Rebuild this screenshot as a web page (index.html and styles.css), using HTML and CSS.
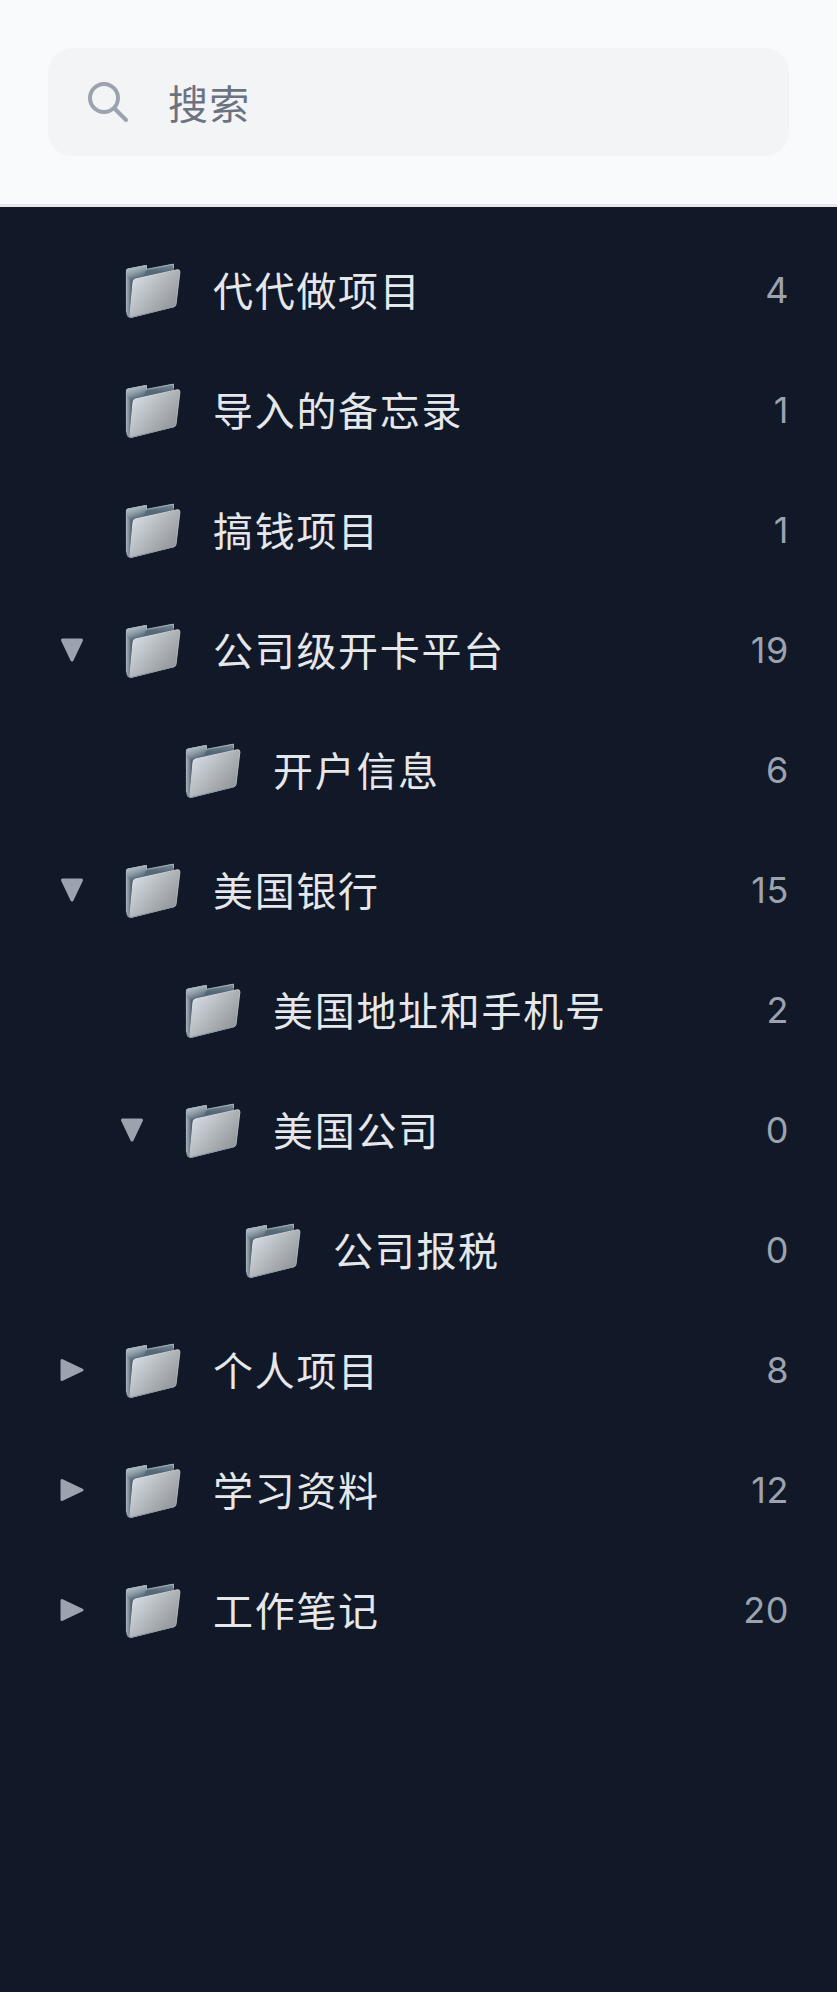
FILE: index.html
```html
<!DOCTYPE html>
<html lang="zh-CN">
<head>
<meta charset="utf-8">
<title>文件夹</title>
<link rel="stylesheet" href="styles.css">
</head>
<body>
<svg class="defs" aria-hidden="true">
  <defs>
    <linearGradient id="tab" gradientUnits="userSpaceOnUse" x1="6" y1="4" x2="12" y2="20">
      <stop offset="0" stop-color="#b8c2cb"/><stop offset="0.4" stop-color="#8e9ca8"/><stop offset="0.75" stop-color="#5b6b78"/><stop offset="1" stop-color="#465460"/>
    </linearGradient>
    <linearGradient id="side" x1="0" y1="0" x2="1" y2="0">
      <stop offset="0" stop-color="#a3afb9"/><stop offset="0.4" stop-color="#84919c"/><stop offset="1" stop-color="#34414c"/>
    </linearGradient>
    <linearGradient id="back" x1="0" y1="0" x2="0" y2="1">
      <stop offset="0" stop-color="#7c8d9b"/><stop offset="0.15" stop-color="#566875"/><stop offset="1" stop-color="#4b5a67"/>
    </linearGradient>
    <linearGradient id="front" x1="0" y1="0.1" x2="1" y2="0.9">
      <stop offset="0" stop-color="#dce3ea"/><stop offset="0.45" stop-color="#b5babf"/><stop offset="1" stop-color="#888c8f"/>
    </linearGradient>
    <linearGradient id="edge" x1="0" y1="0" x2="1" y2="1">
      <stop offset="0" stop-color="#e8eef4"/><stop offset="0.5" stop-color="#bac2c8"/><stop offset="1" stop-color="#a3a9ac"/>
    </linearGradient>
    <symbol id="folder" viewBox="0 0 56 56">
      <path d="M1 8Q1 6 3 5.600L21 2Q22 2 22 3V6L48 .8Q49 .7 49 2V11L8 19 5 54.500Q2 54 1.500 50Z" fill="url(#back)"/>
      <path d="M1 8Q1 6 3 5.600L21 2Q22 2 22 3V6L21 8 18 14 8 19 5 54.500Q2 54 1.500 50Z" fill="url(#tab)"/>
      <path d="M1 14 8 19 5 54.500Q2 54 1.500 50Z" fill="url(#side)"/>
      <path d="M1.400 49V8Q1.500 6.500 3 6.200L21.500 2.500V6.300L48.500 1.200V5" fill="none" stroke="#a9b5bf" stroke-width=".9"/>
      <path d="M8 19Q8.200 16.800 10.500 16L52.500 6.700Q55 6.400 54.900 9L51 41.500Q50.700 43.200 49 43.700L6.500 54.400Q4.600 54.600 5 52.500Z" fill="url(#front)" stroke="url(#edge)" stroke-width="1"/>
      <path d="M2 50Q2.600 54.600 5 54.500L49 43.700" fill="none" stroke="#8b979f" stroke-width="1"/>
    </symbol>
    <symbol id="right" viewBox="0 0 24 24">
      <path d="M2 2.500 22 12 2 21.500Z" fill="#9ca3af" stroke="#9ca3af" stroke-width="3" stroke-linejoin="round"/>
    </symbol>
    <symbol id="down" viewBox="0 0 24 24">
      <path d="M2.500 2H21.500L12 22Z" fill="#9ca3af" stroke="#9ca3af" stroke-width="3" stroke-linejoin="round"/>
    </symbol>
  </defs>
</svg>
<header class="header">
  <div class="search">
    <svg class="search-icon" viewBox="0 0 42 42"><circle cx="17" cy="17" r="14"/><path d="M27.500 27.500 39 39"/></svg>
    <span class="placeholder">搜索</span>
  </div>
</header>
<main class="list">
  <div class="row"><span class="arrow"></span><svg class="folder"><use href="#folder"/></svg><span class="name">代代做项目</span><span class="count">4</span></div>
  <div class="row"><span class="arrow"></span><svg class="folder"><use href="#folder"/></svg><span class="name">导入的备忘录</span><span class="count">1</span></div>
  <div class="row"><span class="arrow"></span><svg class="folder"><use href="#folder"/></svg><span class="name">搞钱项目</span><span class="count">1</span></div>
  <div class="row"><svg class="arrow"><use href="#down"/></svg><svg class="folder"><use href="#folder"/></svg><span class="name">公司级开卡平台</span><span class="count">19</span></div>
  <div class="row level-1"><span class="arrow"></span><svg class="folder"><use href="#folder"/></svg><span class="name">开户信息</span><span class="count">6</span></div>
  <div class="row"><svg class="arrow"><use href="#down"/></svg><svg class="folder"><use href="#folder"/></svg><span class="name">美国银行</span><span class="count">15</span></div>
  <div class="row level-1"><span class="arrow"></span><svg class="folder"><use href="#folder"/></svg><span class="name">美国地址和手机号</span><span class="count">2</span></div>
  <div class="row level-1"><svg class="arrow"><use href="#down"/></svg><svg class="folder"><use href="#folder"/></svg><span class="name">美国公司</span><span class="count">0</span></div>
  <div class="row level-2"><span class="arrow"></span><svg class="folder"><use href="#folder"/></svg><span class="name">公司报税</span><span class="count">0</span></div>
  <div class="row"><svg class="arrow"><use href="#right"/></svg><svg class="folder"><use href="#folder"/></svg><span class="name">个人项目</span><span class="count">8</span></div>
  <div class="row"><svg class="arrow"><use href="#right"/></svg><svg class="folder"><use href="#folder"/></svg><span class="name">学习资料</span><span class="count">12</span></div>
  <div class="row"><svg class="arrow"><use href="#right"/></svg><svg class="folder"><use href="#folder"/></svg><span class="name">工作笔记</span><span class="count">20</span></div>
</main>
</body>
</html>
```
FILE: styles.css
```css
* { box-sizing: border-box; }
body {
  margin: 0;
  min-height: 1992px;
  background: #111827;
  font-family: Inter, "Noto Sans CJK SC", sans-serif;
}
.defs { display: block; width: 0; height: 0; }
.header {
  height: 207px;
  padding: 48px;
  background: #f9fafb;
  border-bottom: 3px solid #e5e7eb;
}
.search {
  display: flex;
  align-items: center;
  height: 108px;
  padding-left: 39px;
  background: #f3f4f6;
  border-radius: 24px;
}
.search-icon {
  width: 42px;
  height: 42px;
  margin-right: 39px;
  fill: none;
  stroke: #9ca3af;
  stroke-width: 4;
  stroke-linecap: round;
}
.placeholder {
  padding-top: 6px;
  color: #6b7280;
  font-size: 40px;
  line-height: 60px;
  letter-spacing: 1.3px;
}
.list { padding: 24px 48px 24px 60px; }
.row {
  display: flex;
  align-items: center;
  height: 120px;
}
.level-1 { padding-left: 60px; }
.level-2 { padding-left: 120px; }
.arrow { flex: none; width: 24px; height: 24px; margin-bottom: 2px; }
.folder { flex: none; width: 56px; height: 56px; margin: 0 32.5px 0 40.5px; }
.name {
  flex: 1;
  padding-top: 1px;
  color: #e5e7eb;
  font-size: 40px;
  line-height: 60px;
  letter-spacing: 1.7px;
}
.count {
  padding-bottom: 2px;
  color: #9ca3af;
  font-size: 36px;
  line-height: 54px;
  letter-spacing: 0.6px;
}
```
